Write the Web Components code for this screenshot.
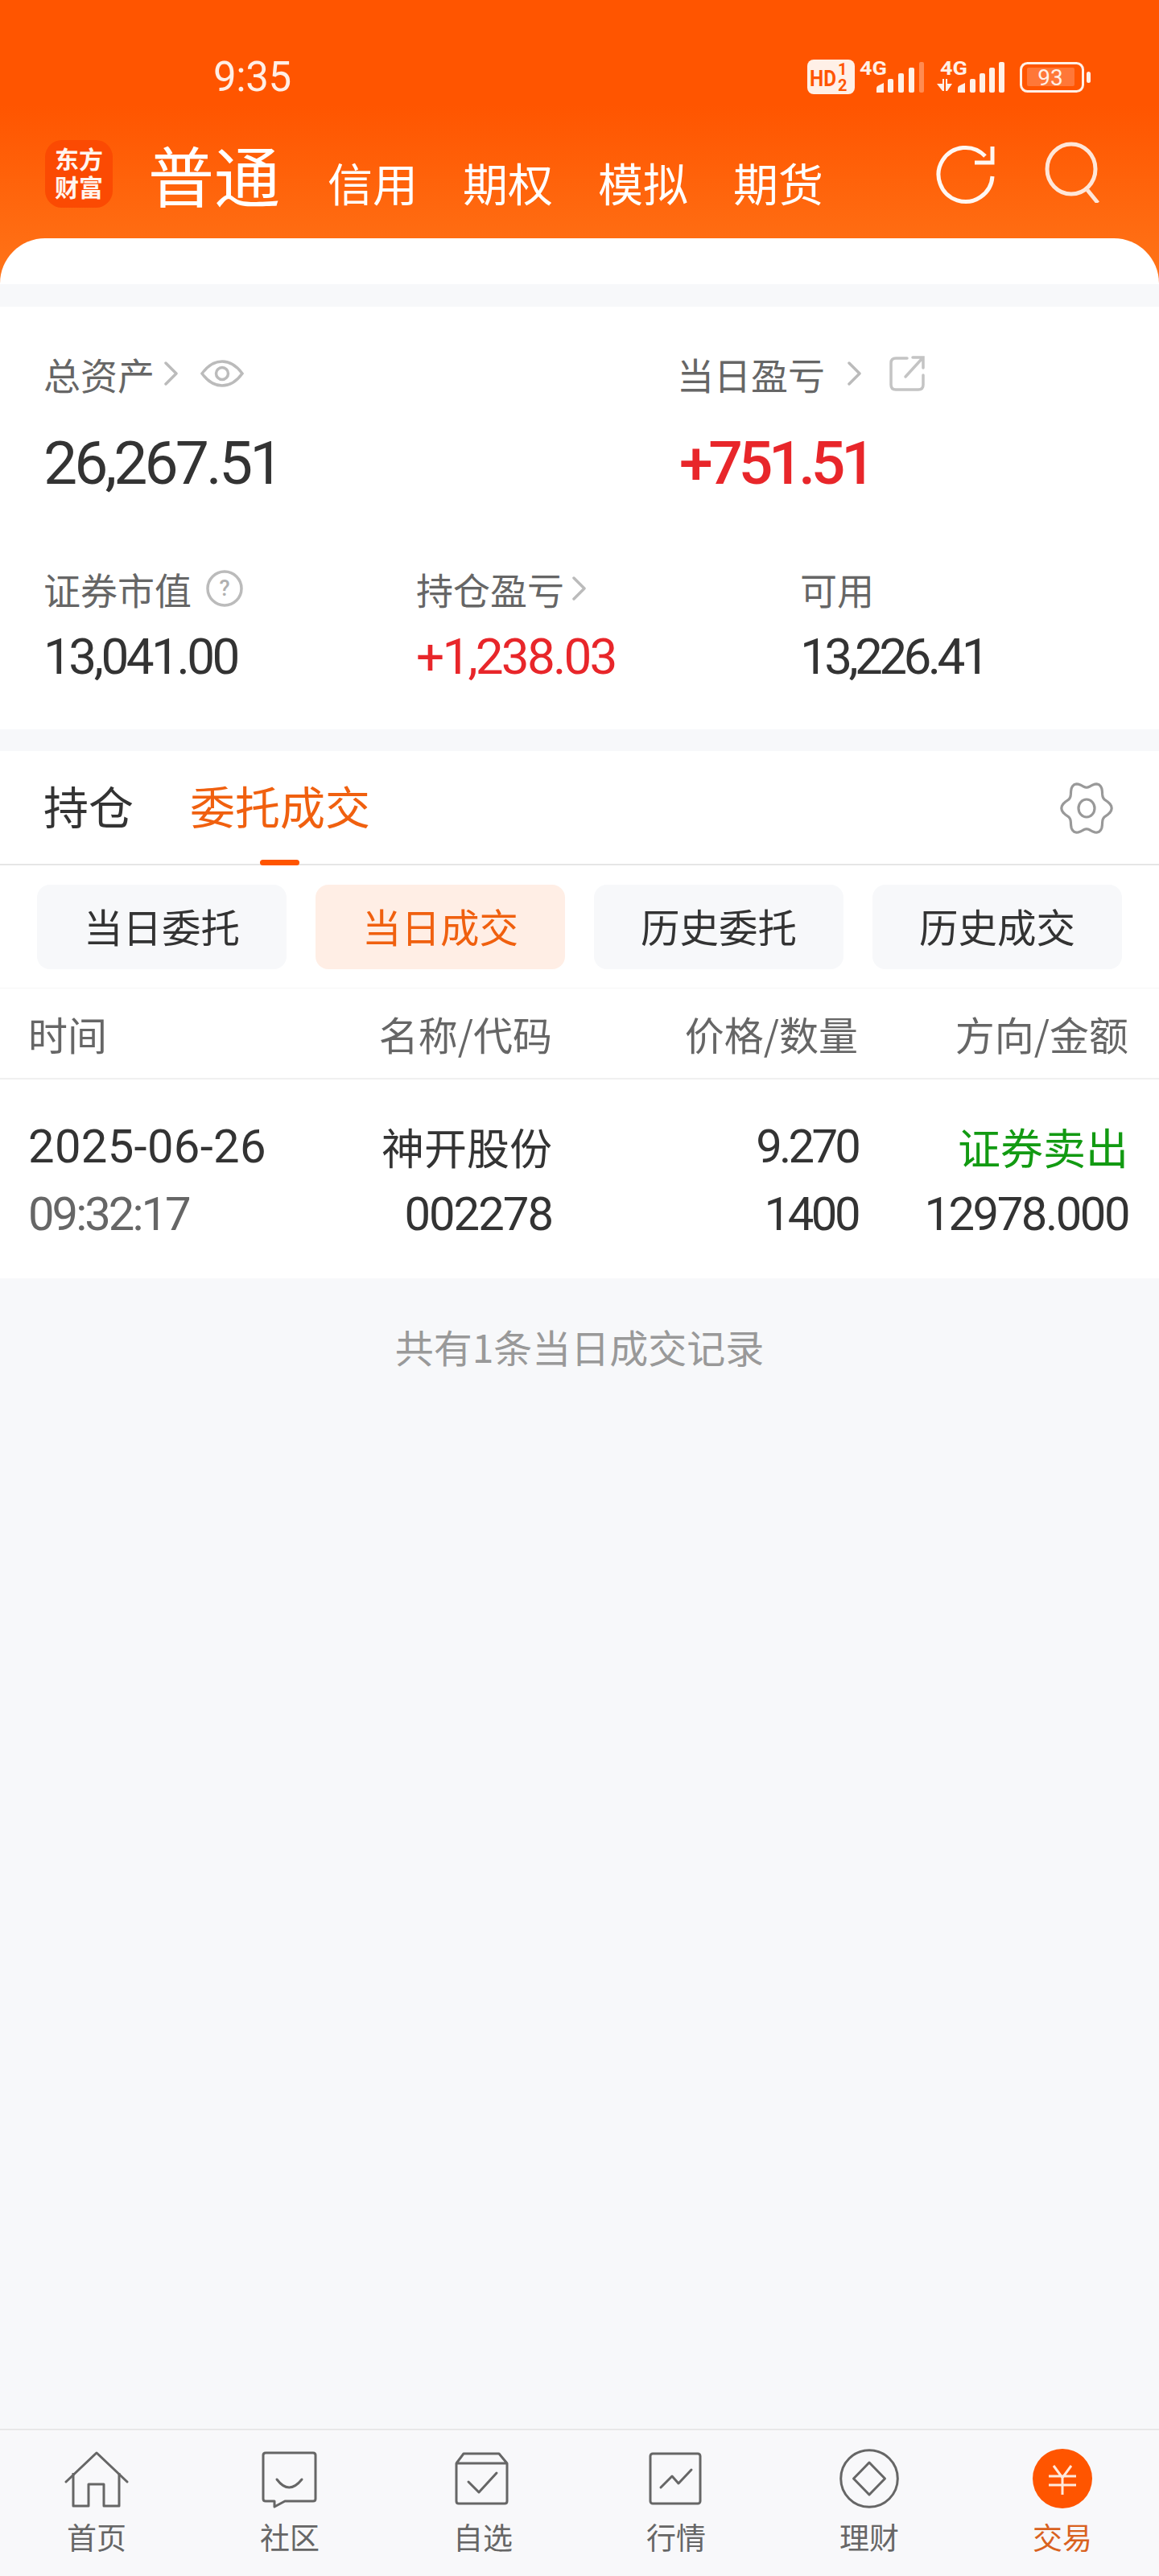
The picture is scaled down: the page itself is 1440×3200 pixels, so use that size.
<!DOCTYPE html>
<html lang="zh">
<head>
<meta charset="utf-8">
<title>交易</title>
<style>
  html, body { margin: 0; padding: 0; background: #f7f8fa; }
  body {
    width: 1440px;
    height: 3200px;
    display: flex;
    flex-direction: column;
    font-family: "Noto Sans CJK SC", "Noto Sans", sans-serif;
    overflow: hidden;
  }
</style>
</head>
<body>
<app-header></app-header>
<asset-summary></asset-summary>
<trade-tabs></trade-tabs>
<filter-pills></filter-pills>
<deal-table></deal-table>
<bottom-nav></bottom-nav>

<script>
const CJK = '"Noto Sans CJK SC", "Noto Sans", sans-serif';
const NUM = 'Roboto, "Noto Sans CJK SC", sans-serif';

class AppHeader extends HTMLElement {
  connectedCallback() {
    const root = this.attachShadow({ mode: 'open' });
    const tabs = ['信用', '期权', '模拟', '期货'].map(t => `<span>${t}</span>`).join('');
    root.innerHTML = `
      <style>
        :host {
          display: block;
          height: 353px;
          background: linear-gradient(#ff5500 0, #ff5500 130px, #ff7519 353px);
        }
        .status {
          height: 174px;
          display: flex;
          box-sizing: border-box;
          padding: 70px 80px 0 265px;
        }
        .time {
          font: 400 51px/52px ${NUM};
          color: #ffefe6;
          letter-spacing: -.4px;
        }
        .status svg { margin-left: auto; }
        .bar {
          height: 122px;
          display: flex;
          align-items: flex-start;
          padding-left: 56px;
        }
        .logo {
          width: 84px;
          height: 84px;
          border-radius: 21px;
          background: #fb4a03;
          color: #fff5ef;
          font: 700 30px/35px Roboto, "Noto Sans CJK SC", sans-serif;
          display: flex;
          align-items: center;
          justify-content: center;
          text-align: center;
        }
        .main {
          margin-left: 44px;
          font: 400 82px/84px ${CJK};
          color: #fff;
        }
        .tabs {
          margin-left: 59px;
          margin-top: 22px;
          display: flex;
          gap: 56px;
          font: 400 56px/60px ${CJK};
          color: #fff;
        }
        .act { margin-left: auto; display: flex; margin-right: 66px; gap: 61px; margin-top: 4px; }
        .card {
          height: 57px;
          background: #fff;
          border-radius: 56px 56px 0 0;
        }
      </style>
      <div class="status">
        <div class="time">9:35</div>
        <svg width="360" height="60" viewBox="1000 70 360 60">
          <rect x="1003" y="74" width="59" height="43" rx="8" fill="#fff0e7"/>
          <text x="1006" y="107" font-family="Roboto" font-weight="700" font-size="27" fill="#ff5500" textLength="33" lengthAdjust="spacingAndGlyphs">HD</text>
          <text x="1041" y="93" font-family="Roboto" font-weight="700" font-size="20" fill="#ff5500">1</text>
          <text x="1041" y="113" font-family="Roboto" font-weight="700" font-size="20" fill="#ff5500">2</text>
          <text x="1068" y="93" font-family="Roboto" font-weight="700" font-size="24" fill="#fff0e7" textLength="34" lengthAdjust="spacingAndGlyphs">4G</text>
          <g fill="#fff0e7">
            <path d="M1089 115v-5q0-3 3-4l6-3v12z"/>
            <rect x="1103" y="98" width="7" height="17" rx="2"/>
            <rect x="1116" y="91" width="7" height="24" rx="2"/>
            <rect x="1129" y="84" width="7" height="31" rx="2" />
            <rect x="1142" y="77" width="6" height="38" rx="2" opacity=".35"/>
          </g>
          <text x="1168" y="93" font-family="Roboto" font-weight="700" font-size="24" fill="#fff0e7" textLength="34" lengthAdjust="spacingAndGlyphs">4G</text>
          <g fill="#fff0e7">
            <path d="M1165 104h7v-6h2v15h-2zM1176 98h2v6h6l-6 9h-2z" transform="translate(-1 0)"/>
            <path d="M1190 115v-5q0-3 3-4l6-3v12z"/>
            <rect x="1205" y="98" width="7" height="17" rx="2"/>
            <rect x="1217" y="91" width="7" height="24" rx="2"/>
            <rect x="1229" y="84" width="7" height="31" rx="2"/>
            <rect x="1241" y="77" width="7" height="38" rx="2"/>
          </g>
          <rect x="1268.5" y="78.5" width="77" height="35" rx="8" fill="none" stroke="#fff0e7" stroke-width="3"/>
          <rect x="1276" y="84" width="59" height="23" rx="2" fill="#ff7738"/>
          <rect x="1350" y="89" width="5" height="14" rx="2.5" fill="#fff0e7"/>
          <text x="1305" y="106" text-anchor="middle" font-family="Roboto" font-size="28" fill="#fff0e7">93</text>
        </svg>
      </div>
      <div class="bar">
        <div class="logo"><div>东方<br>财富</div></div>
        <div class="main">普通</div>
        <div class="tabs">${tabs}</div>
        <div class="act">
          <svg width="76" height="76" viewBox="0 0 76 76" fill="none" stroke="#fff7f2" stroke-width="5">
            <path d="M72 41a33.500 33.500 0 1 1-9-25"/>
            <path d="M72 4v20H50"/>
          </svg>
          <svg width="76" height="76" viewBox="0 0 76 76" fill="none" stroke="#ffe6d8" stroke-width="5" style="margin-top:-2px">
            <ellipse cx="33" cy="34" rx="30" ry="31"/>
            <path d="M53 60l13 16"/>
          </svg>
        </div>
      </div>
      <div class="card"></div>
    `;
  }
}

const CHEV = `<svg width="18" height="30" viewBox="0 0 18 30" fill="none" stroke="#bbb" stroke-width="3.500" stroke-linecap="round" stroke-linejoin="round"><path d="M2 2l13 13L2 28"/></svg>`;

class AssetSummary extends HTMLElement {
  connectedCallback() {
    const root = this.attachShadow({ mode: 'open' });
    root.innerHTML = `
      <style>
        :host {
          display: block;
          margin-top: 28px;
          height: 525px;
          background: #fff;
        }
        .row { display: grid; }
        .top { grid-template-columns: 787px 1fr; padding: 58px 0 0 54px; }
        .bot { grid-template-columns: 463px 477px 1fr; padding: 0 0 0 54px; margin-top: 87px; }
        .lab {
          display: flex;
          align-items: center;
          font: 400 46px/50px ${CJK};
          color: #666;
          height: 50px;
        }
        .val {
          font-family: ${NUM};
          color: #333;
          font-weight: 400;
        }
        .big { font-size: 75px; line-height: 88px; margin-top: 42px; letter-spacing: -3.900px; }
        .small { font-size: 62px; line-height: 72px; margin-top: 24px; letter-spacing: -3.500px; }
        .red { color: #e8262a; }
        .gain { font-weight: 500; letter-spacing: -5.300px; margin-left: 3px; }
        .tight { letter-spacing: -4.600px; }
        .pos { letter-spacing: -2.800px; }
      </style>
      <div class="row top">
        <div>
          <div class="lab">总资产
            <span style="margin-left:12px;display:flex">${CHEV}</span>
            <svg style="margin-left:27px" width="54" height="34" viewBox="0 0 54 34" fill="none" stroke="#bbb" stroke-width="3.500"><path d="M2 17C10 6 18 2 27 2s17 4 25 15c-8 11-16 15-25 15S10 28 2 17z"/><circle cx="27" cy="17" r="7.500"/></svg>
          </div>
          <div class="val big">26,267.51</div>
        </div>
        <div>
          <div class="lab">当日盈亏
            <span style="margin-left:28px;display:flex">${CHEV}</span>
            <svg style="margin-left:34px" width="44" height="44" viewBox="0 0 44 44" fill="none" stroke="#c4c4c4" stroke-width="3.500" stroke-linecap="round"><path d="M22 3H8q-6 0-6 6v27q0 6 6 6h28q6 0 6-6V24"/><path d="M20 26L41 3M29 2h13v13"/></svg>
          </div>
          <div class="val big gain red">+751.51</div>
        </div>
      </div>
      <div class="row bot">
        <div>
          <div class="lab">证券市值
            <svg style="margin-left:18px" width="46" height="46" viewBox="0 0 46 46" fill="none"><circle cx="23" cy="23" r="21" stroke="#bbb" stroke-width="3.500"/><text x="23" y="32" text-anchor="middle" font-family="Roboto" font-weight="500" font-size="27" fill="#b0b0b0">?</text></svg>
          </div>
          <div class="val small">13,041.00</div>
        </div>
        <div>
          <div class="lab">持仓盈亏<span style="margin-left:10px;display:flex">${CHEV}</span></div>
          <div class="val small pos red">+1,238.03</div>
        </div>
        <div>
          <div class="lab">可用</div>
          <div class="val small tight">13,226.41</div>
        </div>
      </div>
    `;
  }
}

// six rounded teeth, stretched a little in y like the original icon
function gearPath() {
  const pts = [];
  for (let i = 0; i < 72; i++) {
    const a = i * Math.PI / 36;
    const r = 27.5 + 3.7 * Math.cos(6 * a);
    pts.push((r * Math.cos(a)).toFixed(1) + ' ' + (1.08 * r * Math.sin(a)).toFixed(1));
  }
  return 'M' + pts.join('L') + 'z';
}

class TradeTabs extends HTMLElement {
  connectedCallback() {
    const root = this.attachShadow({ mode: 'open' });
    root.innerHTML = `
      <style>
        :host {
          display: flex;
          align-items: center;
          box-sizing: border-box;
          margin-top: 27px;
          height: 142px;
          padding: 0 57px 6px 54px;
          background: #fff;
          border-bottom: 2px solid #e6e6e6;
          position: relative;
          font: 400 56px/60px ${CJK};
          color: #333;
        }
        .on { margin-left: 70px; color: #f0600f; }
        .line {
          position: absolute;
          left: 323px;
          bottom: -2px;
          width: 49px;
          height: 7px;
          border-radius: 4px;
          background: #ff5500;
        }
        svg { margin-left: auto; margin-top: 8px; }
      </style>
      <span>持仓</span><span class="on">委托成交</span>
      <div class="line"></div>
      <svg width="66" height="64" viewBox="-33 -32 66 64" fill="none" stroke="#999" stroke-width="3.200" stroke-linejoin="round">
        <path d="${gearPath()}"/>
        <ellipse cx="0" cy="0" rx="10" ry="11"/>
      </svg>
    `;
  }
}

class FilterPills extends HTMLElement {
  connectedCallback() {
    const root = this.attachShadow({ mode: 'open' });
    const items = [['当日委托'], ['当日成交', 'on'], ['历史委托'], ['历史成交']];
    root.innerHTML = `
      <style>
        :host {
          display: flex;
          gap: 36px;
          box-sizing: border-box;
          height: 153px;
          padding: 24px 0 0 46px;
          background: #fff;
          border-bottom: 1px solid #f6f6f6;
        }
        div {
          width: 310px;
          height: 105px;
          border-radius: 16px;
          background: #f7f8fa;
          color: #333;
          font: 400 48.500px/102px ${CJK};
          text-align: center;
        }
        .on { background: #ffeee5; color: #f0600f; }
      </style>
      ${items.map(([t, c]) => `<div class="${c || ''}">${t}</div>`).join('')}
    `;
  }
}

class DealTable extends HTMLElement {
  connectedCallback() {
    const root = this.attachShadow({ mode: 'open' });
    root.innerHTML = `
      <style>
        :host { display: block; flex: 1; }
        .wrap { background: #fff; }
        .head, .row {
          display: grid;
          grid-template-columns: 307px 344px 380px 1fr;
          padding: 0 38px 0 35px;
        }
        .head {
          height: 113px;
          align-items: center;
          border-bottom: 2px solid #f0f0f0;
          font: 400 49px/60px ${CJK};
          color: #666;
          box-sizing: border-box;
        }
        .row {
          height: 247px;
          box-sizing: border-box;
          padding-top: 41px;
          font: 400 58px/84px ${NUM};
          color: #333;
        }
        .r { text-align: right; }
        .cjk { font: 400 53px/84px ${CJK}; }
        .date { letter-spacing: .3px; }
        .clock { color: #666; letter-spacing: -3px; }
        .s20 { letter-spacing: -2px; }
        .s25 { letter-spacing: -2.500px; }
        .s38 { letter-spacing: -3.800px; }
        .s35 { letter-spacing: -3.500px; }
        .green { color: #129a12; }
        .note {
          text-align: center;
          font: 400 48px/60px ${CJK};
          color: #999;
          margin-top: 54px;
        }
      </style>
      <div class="wrap">
        <div class="head">
          <span>时间</span><span class="r">名称/代码</span><span class="r">价格/数量</span><span class="r">方向/金额</span>
        </div>
        <div class="row">
          <div><div class="date">2025-06-26</div><div class="clock">09:32:17</div></div>
          <div class="r"><div class="cjk">神开股份</div><div class="s20">002278</div></div>
          <div class="r"><div class="s38">9.270</div><div class="s35">1400</div></div>
          <div class="r"><div class="cjk green">证券卖出</div><div class="s25">12978.000</div></div>
        </div>
      </div>
      <div class="note">共有1条当日成交记录</div>
    `;
  }
}

class BottomNav extends HTMLElement {
  connectedCallback() {
    const root = this.attachShadow({ mode: 'open' });
    const s = 'viewBox="0 -3 80 76" width="80" height="76" fill="none" stroke="#666" stroke-width="3" stroke-linejoin="round"';
    const icons = [
      ['首页', `<svg ${s}><path d="M2 38L40 2l38 36" stroke-linecap="round"/><path d="M11 27V68H30V41H49V68H68V27"/></svg>`],
      ['社区', `<svg ${s}><path d="M10 2h59q3 0 3 3v54q0 3-3 3H34L21 69V62H10q-3 0-3-3V5q0-3 3-3z"/><path d="M24 35q15 20 31 0" stroke-linecap="round"/></svg>`],
      ['自选', `<svg ${s}><path d="M7 15h63v47q0 3-3 3H10q-3 0-3-3zM7 15l9-12h44l10 12"/><path d="M22 38l13 13 22-24" stroke-linecap="round"/></svg>`],
      ['行情', `<svg ${s}><rect x="8" y="3" width="62" height="62" rx="3"/><path d="M21 45l14-14 8 9 16-17" stroke-linecap="round"/></svg>`],
      ['理财', `<svg ${s}><circle cx="40" cy="34" r="35.300"/><path d="M40 14l19.500 20L40 54 20.500 34z"/></svg>`],
      ['交易', `<svg viewBox="0 -3 80 76" width="80" height="76" fill="none"><circle cx="40" cy="34" r="37" fill="#ff5500"/><path d="M29 18l11 15 11-15M23 31h34M23 42h34M40 33v21" stroke="#ffe9dc" stroke-width="3"/></svg>`, 'on']
    ];
    root.innerHTML = `
      <style>
        :host {
          display: grid;
          grid-template-columns: repeat(6, 1fr);
          height: 183px;
          box-sizing: border-box;
          border-top: 2px solid #e8e8e8;
          background: #f8f8fa;
          padding-top: 23px;
        }
        .it {
          display: flex;
          flex-direction: column;
          align-items: center;
          font: 400 37px/44px ${CJK};
          color: #666;
          gap: 11px;
        }
        .on { color: #d9621f; }
        svg { display: block; }
      </style>
      ${icons.map(([t, svg, c]) => `<div class="it ${c || ''}">${svg}<span>${t}</span></div>`).join('')}
    `;
  }
}

customElements.define('app-header', AppHeader);
customElements.define('asset-summary', AssetSummary);
customElements.define('trade-tabs', TradeTabs);
customElements.define('filter-pills', FilterPills);
customElements.define('deal-table', DealTable);
customElements.define('bottom-nav', BottomNav);
</script>
</body>
</html>
